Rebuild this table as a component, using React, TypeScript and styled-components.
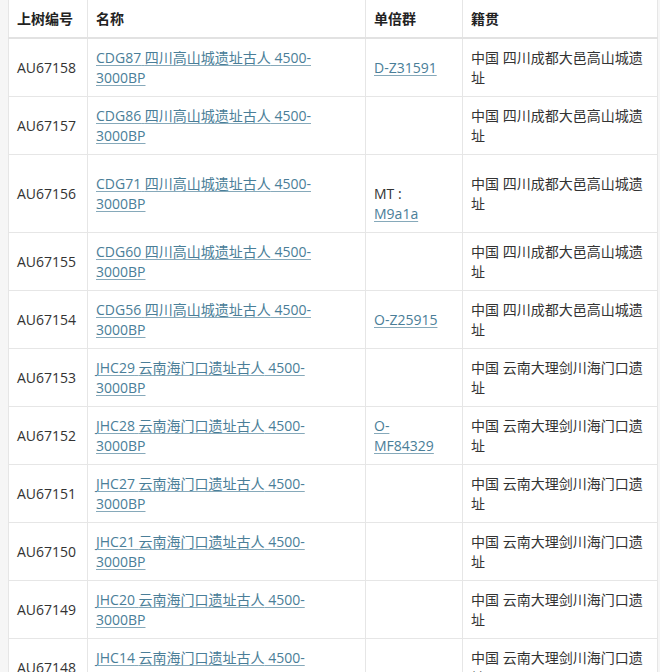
import React from 'react'
import styled, { createGlobalStyle } from 'styled-components'

type Row = {
	id: string
	code: string
	place: string
	group?: string
	groupPrefix?: string
	origin: string
}

const SC = '四川高山城遗址古人'
const YN = '云南海门口遗址古人'
const SC_ORIGIN = '中国 四川成都大邑高山城遗址'
const YN_ORIGIN = '中国 云南大理剑川海门口遗址'

const rows: Row[] = [
	{ id: 'AU67158', code: 'CDG87', place: SC, group: 'D-Z31591', origin: SC_ORIGIN },
	{ id: 'AU67157', code: 'CDG86', place: SC, origin: SC_ORIGIN },
	{ id: 'AU67156', code: 'CDG71', place: SC, groupPrefix: 'MT :', group: 'M9a1a', origin: SC_ORIGIN },
	{ id: 'AU67155', code: 'CDG60', place: SC, origin: SC_ORIGIN },
	{ id: 'AU67154', code: 'CDG56', place: SC, group: 'O-Z25915', origin: SC_ORIGIN },
	{ id: 'AU67153', code: 'JHC29', place: YN, origin: YN_ORIGIN },
	{ id: 'AU67152', code: 'JHC28', place: YN, group: 'O-MF84329', origin: YN_ORIGIN },
	{ id: 'AU67151', code: 'JHC27', place: YN, origin: YN_ORIGIN },
	{ id: 'AU67150', code: 'JHC21', place: YN, origin: YN_ORIGIN },
	{ id: 'AU67149', code: 'JHC20', place: YN, origin: YN_ORIGIN },
	{ id: 'AU67148', code: 'JHC14', place: YN, origin: YN_ORIGIN }
]

// long group names break after the hyphen, like the source page
const splitGroup = (group: string) => {
	const i = group.indexOf('-')
	if (group.length < 9 || i < 0) return group
	return (
		<>
			{group.slice(0, i + 1)}
			<br />
			{group.slice(i + 1)}
		</>
	)
}

const App = () => {
	return (
		<>
			<GlobalStyle />
			<Page>
				<Table>
					<colgroup>
						<col style={{ width: 79 }} />
						<col style={{ width: 278 }} />
						<col style={{ width: 97 }} />
						<col style={{ width: 195 }} />
					</colgroup>
					<thead>
						<tr>
							<Th>上树编号</Th>
							<Th>名称</Th>
							<Th>单倍群</Th>
							<Th>籍贯</Th>
						</tr>
					</thead>
					<tbody>
						{rows.map((row) => (
							<tr key={row.id}>
								<Td>{row.id}</Td>
								<Td>
									<Link href='#'>
										{row.code} {row.place} 4500-
										<br />
										3000BP
									</Link>
								</Td>
								<Td>
									{row.groupPrefix && (
										<>
											<br />
											{row.groupPrefix}
											<br />
										</>
									)}
									{row.group && <Link href='#'>{splitGroup(row.group)}</Link>}
								</Td>
								<Td>{row.origin}</Td>
							</tr>
						))}
					</tbody>
				</Table>
			</Page>
		</>
	)
}

const GlobalStyle = createGlobalStyle`
	html, body {
		margin: 0;
		padding: 0;
		background: #f6f6f6;
	}
	body {
		font-family: 'Open Sans', 'Noto Sans CJK SC', sans-serif;
		font-size: 14px;
		color: #333;
	}
`

const Page = styled.div`
	padding: 0 3px 0 8px;
`

const Table = styled.table`
	width: 649px;
	border-collapse: collapse;
	table-layout: fixed;
	background: #fff;
	line-height: 20px;
`

const Th = styled.th`
	text-align: left;
	font-weight: 700;
	padding: 9px 8px 8px;
	border: 1px solid #e6e6e6;
	border-top: none;
	border-bottom: 2px solid #e2e2e2;
	color: #222;
`

const Td = styled.td`
	padding: 9px 8px 8px;
	border: 1px solid #e6e6e6;
	vertical-align: middle;
	word-wrap: break-word;
`

const Link = styled.a`
	color: #4a7e98;
	text-decoration: underline;
	text-decoration-color: #86a9ba;
	text-underline-offset: 2px;
`

export default App
